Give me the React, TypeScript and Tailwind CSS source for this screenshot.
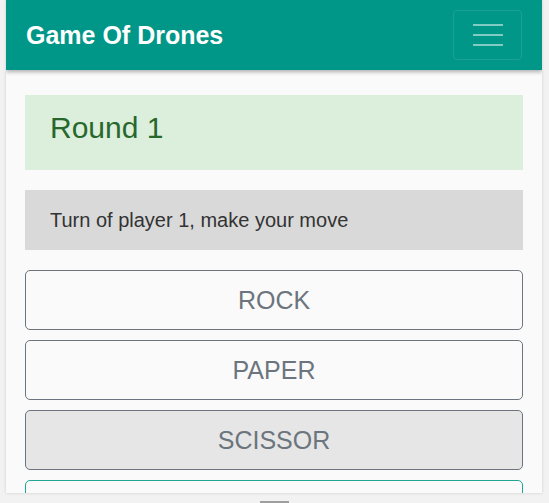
import React from "react";

export default function App() {
  const font = { fontFamily: '"Liberation Sans", Arial, sans-serif' };
  return (
    <div className="min-h-[503px] w-full bg-[#f2f2f2] overflow-hidden" style={font}>
      <div className="ml-[6px] w-[536px] h-[493px] bg-[#fafafa] shadow-[0_0_3px_rgba(0,0,0,0.15)] flex flex-col overflow-hidden">
        <header className="h-[70px] shrink-0 bg-[#009688] flex items-center justify-between pl-[20px] pr-[20px] shadow-[0_2px_4px_rgba(0,0,0,0.3)] relative z-10">
          <span className="text-white font-bold text-[25px] leading-[28px]">Game Of Drones</span>
          <button className="w-[69px] h-[50px] rounded-[4px] border border-[rgba(255,255,255,0.1)] flex flex-col items-center justify-center gap-[8px]">
            <span className="block w-[30px] h-[2px] bg-[rgba(255,255,255,0.5)]" />
            <span className="block w-[30px] h-[2px] bg-[rgba(255,255,255,0.5)]" />
            <span className="block w-[30px] h-[2px] bg-[rgba(255,255,255,0.5)]" />
          </button>
        </header>
        <main className="flex flex-col px-[19px] pt-[25px]">
          <div className="h-[75px] bg-[#dcefdc] pl-[25px] pt-[15px]">
            <h1 className="text-[30px] leading-[36px] text-[#28672c]">Round 1</h1>
          </div>
          <div className="mt-[20px] h-[60px] bg-[#d9d9d9] pl-[25px] flex items-center">
            <p className="text-[20px] leading-[24px] text-[#333333]">Turn of player 1, make your move</p>
          </div>
          <div className="mt-[20px] flex flex-col gap-[10px]">
            <button className="h-[60px] w-full rounded-[5px] border border-[#6c757d] bg-transparent text-[25px] leading-[28px] text-[#6c757d]">ROCK</button>
            <button className="h-[60px] w-full rounded-[5px] border border-[#6c757d] bg-transparent text-[25px] leading-[28px] text-[#6c757d]">PAPER</button>
            <button className="h-[60px] w-full rounded-[5px] border border-[#6c757d] bg-[#e6e6e6] text-[25px] leading-[28px] text-[#6c757d]">SCISSOR</button>
            <button aria-label="play" className="h-[60px] w-full rounded-[5px] border border-[#1fa594] bg-transparent" />
          </div>
        </main>
      </div>
      <div className="ml-[260px] mt-[8px] w-[29px] h-[4px] bg-[#9e9e9e]" />
    </div>
  );
}
